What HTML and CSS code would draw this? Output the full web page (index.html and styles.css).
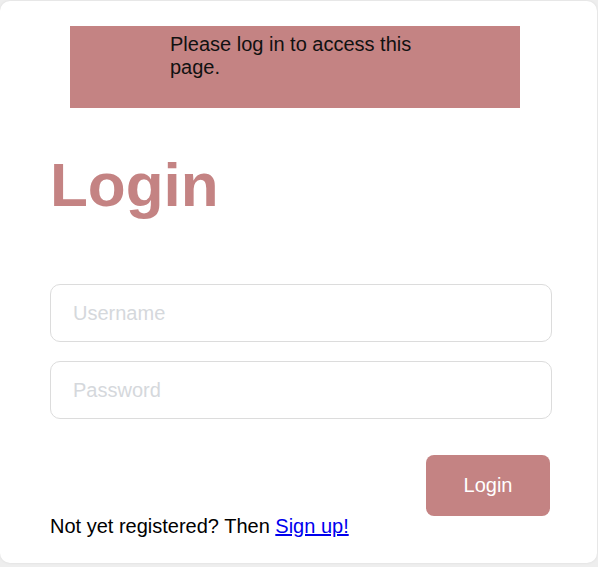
FILE: index.html
```html
<!DOCTYPE html>
<html lang="en">
<head>
<meta charset="utf-8">
<title>Login</title>
<link rel="stylesheet" href="styles.css">
</head>
<body>
<main class="card">
  <div class="alert">Please log in to access this page.</div>
  <h1 class="title">Login</h1>
  <form class="form">
    <input class="field" type="text" placeholder="Username">
    <input class="field" type="password" placeholder="Password">
    <div class="actions">
      <button class="btn" type="button">Login</button>
    </div>
  </form>
  <p class="note">Not yet registered? Then <a href="#" class="link">Sign up!</a></p>
</main>
</body>
</html>
```
FILE: styles.css
```css
html, body {
  margin: 0;
  padding: 0;
}
body {
  background: #eeeeee;
  font-family: "Liberation Sans", Arial, sans-serif;
  width: 598px;
  height: 567px;
  overflow: hidden;
}
.card {
  box-sizing: border-box;
  width: 597px;
  height: 562px;
  margin-top: 1px;
  background: #ffffff;
  border-radius: 10px;
  box-shadow: 0 0 3px rgba(0, 0, 0, 0.08);
  padding: 25px 0 0 50px;
  display: flex;
  flex-direction: column;
}
.alert {
  box-sizing: border-box;
  width: 450px;
  margin-left: 20px;
  background: #c48383;
  color: #111111;
  font-size: 20px;
  line-height: 23px;
  padding: 7px 100px 29px;
}
.title {
  margin: 41px 0 0;
  font-size: 62px;
  line-height: 72px;
  font-weight: bold;
  color: #c48383;
}
.form {
  width: 500px;
  margin-top: 63px;
  display: flex;
  flex-direction: column;
  gap: 19px;
}
.field {
  box-sizing: border-box;
  width: 502px;
  height: 58px;
  margin: 0;
  border: 1px solid #dcdcdc;
  border-radius: 10px;
  padding: 0 22px;
  font-family: "Liberation Sans", Arial, sans-serif;
  font-size: 20px;
  color: #333333;
  background: #ffffff;
  outline: none;
}
.field::placeholder {
  color: #d5d8dc;
}
.actions {
  display: flex;
  justify-content: flex-end;
  margin-top: 17px;
}
.btn {
  width: 124px;
  height: 61px;
  border: none;
  border-radius: 8px;
  background: #c48383;
  color: #ffffff;
  font-family: "Liberation Sans", Arial, sans-serif;
  font-size: 20px;
  padding: 0;
}
.note {
  margin: -1px 0 0;
  font-size: 20px;
  line-height: 23px;
  color: #000000;
}
.link {
  color: #0000ee;
  text-decoration: underline;
}
```
